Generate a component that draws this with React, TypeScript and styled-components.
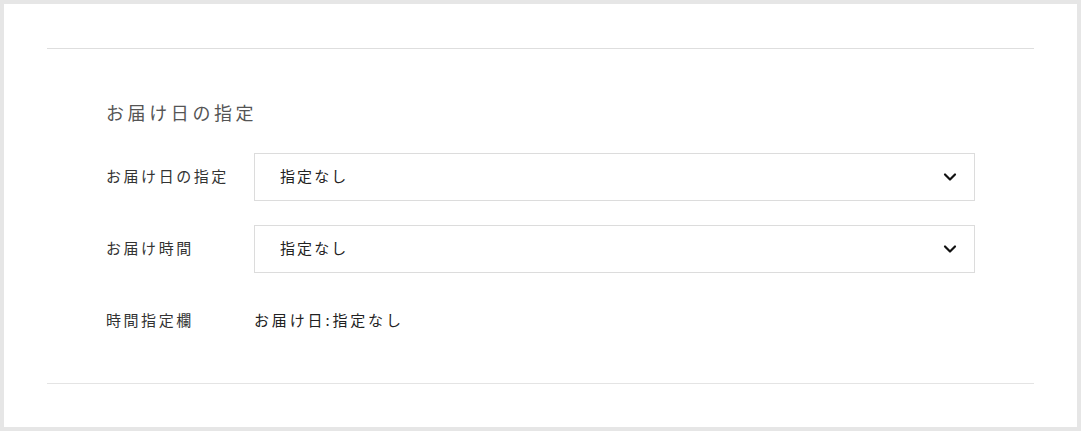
import React from "react";
import styled, { createGlobalStyle } from "styled-components";

const Global = createGlobalStyle`
  html, body { margin: 0; padding: 0; background: #fff; }
  body { font-family: "Noto Sans CJK JP", "Noto Sans", sans-serif; }
  * { box-sizing: border-box; }
`;

const Frame = styled.div`
  width: 1081px;
  height: 431px;
  border: 4px solid #e6e6e6;
  padding: 44px 43px;
  background: #fff;
`;

const Section = styled.section`
  border-top: 1px solid #dedede;
  border-bottom: 1px solid #e4e4e4;
  padding: 50px 59px 38px;
`;

const Heading = styled.h2`
  margin: 0 0 26px;
  font-size: 18px;
  line-height: 26px;
  padding-bottom: 2px;
  font-weight: 400;
  letter-spacing: 0.2em;
  color: #555;
`;

const Rows = styled.div`
  display: flex;
  flex-direction: column;
  gap: 24px;
`;

const Row = styled.div`
  display: grid;
  grid-template-columns: 148px 721px;
  align-items: center;
  height: 48px;
`;

const Label = styled.span`
  font-size: 15px;
  letter-spacing: 0.17em;
  color: #333;
  padding-bottom: 4px;
`;

const SelectBox = styled.div`
  height: 48px;
  border: 1px solid #dcdcdc;
  display: flex;
  align-items: center;
  justify-content: space-between;
  padding: 0 17px 3px 25px;
  font-size: 15px;
  letter-spacing: 0.14em;
  color: #222;
  background: #fff;
`;

const Value = styled.span`
  font-size: 15px;
  letter-spacing: 0.19em;
  color: #222;
  padding-bottom: 4px;
`;

const ChevronIcon = styled.svg`
  margin-top: 3px;
`;

const Chevron = () => (
  <ChevronIcon width="14" height="10" viewBox="0 0 14 10" aria-hidden>
    <path d="M2 2.5 L7 7.5 L12 2.5" fill="none" stroke="#111" strokeWidth="2.2" strokeLinecap="round" strokeLinejoin="round" />
  </ChevronIcon>
);

const Select = ({ value }: { value: string }) => (
  <SelectBox>
    <span>{value}</span>
    <Chevron />
  </SelectBox>
);

export default function App() {
  return (
    <>
      <Global />
      <Frame>
        <Section>
          <Heading>お届け日の指定</Heading>
          <Rows>
            <Row>
              <Label>お届け日の指定</Label>
              <Select value="指定なし" />
            </Row>
            <Row>
              <Label>お届け時間</Label>
              <Select value="指定なし" />
            </Row>
            <Row>
              <Label>時間指定欄</Label>
              <Value>お届け日:指定なし</Value>
            </Row>
          </Rows>
        </Section>
      </Frame>
    </>
  );
}
